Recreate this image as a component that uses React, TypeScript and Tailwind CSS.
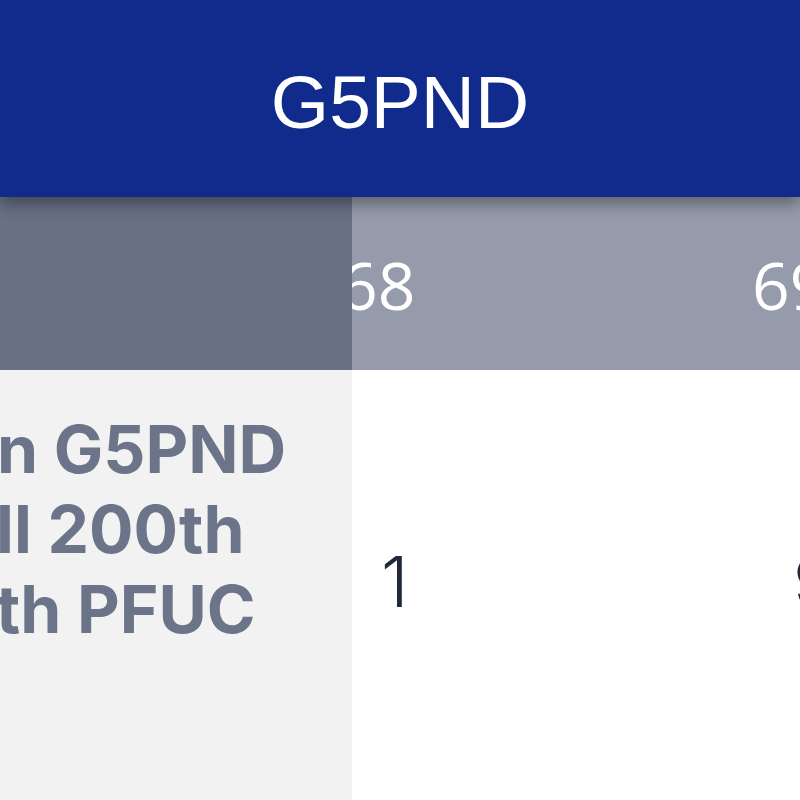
const columns = [
  { label: '68', value: '1' },
  { label: '69', value: '9' },
];

const App = () => {
  return (
    <div className="w-[800px] h-[800px] overflow-hidden bg-white" style={{ fontFamily: 'Inter, "Liberation Sans", sans-serif' }}>
      <div className="relative z-20 h-[197px] bg-[#102b8b] flex items-center justify-center shadow-[0_6px_16px_rgba(0,0,0,0.4)]">
        <span className="text-white text-[75px] leading-none font-['Liberation_Sans',Arial,sans-serif] pt-[7px]">G5PND</span>
      </div>

      <div className="flex h-[173px]">
        <div className="w-[352px] shrink-0 bg-[#687084] relative z-10" />
        <div className="flex-1 overflow-hidden bg-[#959bab]">
          <div className="flex ml-[-52px] h-full">
            {columns.map((col) => (
              <div key={col.label} className="w-[412px] shrink-0 flex items-center pl-[40px]">
                <span className="text-white text-[66px] leading-none font-['Open_Sans','Noto_Sans',sans-serif]">{col.label}</span>
              </div>
            ))}
          </div>
        </div>
      </div>

      <div className="flex h-[430px]">
        <div className="w-[352px] shrink-0 bg-[#f2f2f3] overflow-hidden relative z-10 pt-[39px]">
          <div className="text-[#6b7488] font-bold text-[66px] leading-[80px] whitespace-nowrap">
            <div className="ml-[-3px]">n G5PND</div>
            <div className="ml-[-4px]">ll 200th</div>
            <div className="ml-[-4px]">th PFUC</div>
          </div>
        </div>
        <div className="flex-1 overflow-hidden">
          <div className="flex ml-[-52px]">
            {columns.map((col) => (
              <div key={col.label} className="w-[412px] shrink-0 pt-[177px] pl-[81px]">
                <span className="text-[#1f2937] text-[70px] leading-none font-light">{col.value}</span>
              </div>
            ))}
          </div>
        </div>
      </div>
    </div>
  );
};

export default App;
